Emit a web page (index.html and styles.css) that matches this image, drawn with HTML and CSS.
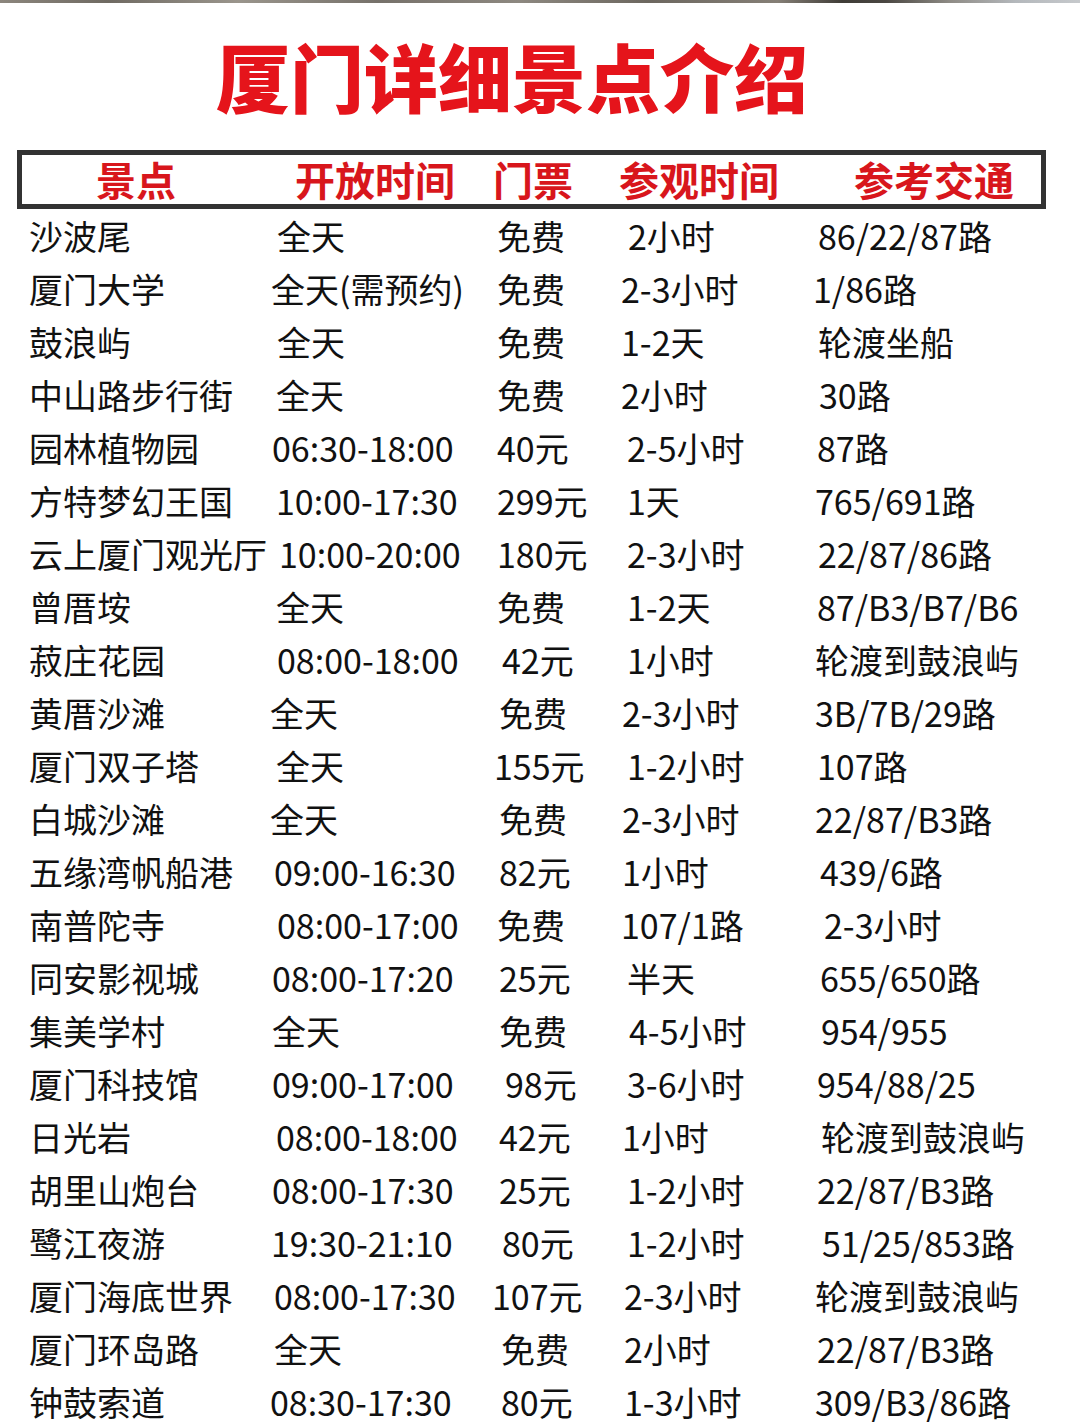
FILE: index.html
```html
<!DOCTYPE html>
<html lang="zh-CN">
<head>
<meta charset="utf-8">
<title>厦门详细景点介绍</title>
<link rel="stylesheet" href="styles.css">
</head>
<body>
<div class="page">
  <div class="strip"></div>
  <h1 class="title">厦门详细景点介绍</h1>
  <div class="head">
    <span class="h">景点</span>
    <span class="h">开放时间</span>
    <span class="h">门票</span>
    <span class="h">参观时间</span>
    <span class="h">参考交通</span>
  </div>
  <div class="table">
    <div class="row"><span>沙波尾</span><span class="s7">全天</span><span class="s5">免费</span><span class="s8">2小时</span><span class="s5">86/22/87路</span></div>
    <div class="row"><span>厦门大学</span><span class="s1">全天(需预约)</span><span class="s5">免费</span><span class="s1">2-3小时</span><span class="s0">1/86路</span></div>
    <div class="row"><span>鼓浪屿</span><span class="s7">全天</span><span class="s5">免费</span><span class="s1">1-2天</span><span class="s5">轮渡坐船</span></div>
    <div class="row"><span>中山路步行街</span><span class="s6">全天</span><span class="s5">免费</span><span class="s1">2小时</span><span class="s6">30路</span></div>
    <div class="row"><span>园林植物园</span><span class="s2">06:30-18:00</span><span class="s5">40元</span><span class="s7">2-5小时</span><span class="s4">87路</span></div>
    <div class="row"><span>方特梦幻王国</span><span class="s6">10:00-17:30</span><span class="s5">299元</span><span class="s7">1天</span><span class="s2">765/691路</span></div>
    <div class="row"><span>云上厦门观光厅</span><span class="s9">10:00-20:00</span><span class="s5">180元</span><span class="s7">2-3小时</span><span class="s5">22/87/86路</span></div>
    <div class="row"><span>曾厝垵</span><span class="s6">全天</span><span class="s5">免费</span><span class="s7">1-2天</span><span class="s4">87/B3/B7/B6</span></div>
    <div class="row"><span>菽庄花园</span><span class="s7">08:00-18:00</span><span class="s10">42元</span><span class="s7">1小时</span><span class="s2">轮渡到鼓浪屿</span></div>
    <div class="row"><span>黄厝沙滩</span><span class="s0">全天</span><span class="s7">免费</span><span class="s2">2-3小时</span><span class="s2">3B/7B/29路</span></div>
    <div class="row"><span>厦门双子塔</span><span class="s6">全天</span><span class="s2">155元</span><span class="s7">1-2小时</span><span class="s4">107路</span></div>
    <div class="row"><span>白城沙滩</span><span class="s0">全天</span><span class="s7">免费</span><span class="s2">2-3小时</span><span class="s2">22/87/B3路</span></div>
    <div class="row"><span>五缘湾帆船港</span><span class="s4">09:00-16:30</span><span class="s7">82元</span><span class="s2">1小时</span><span class="s7">439/6路</span></div>
    <div class="row"><span>南普陀寺</span><span class="s7">08:00-17:00</span><span class="s5">免费</span><span class="s1">107/1路</span><span class="s11">2-3小时</span></div>
    <div class="row"><span>同安影视城</span><span class="s2">08:00-17:20</span><span class="s7">25元</span><span class="s7">半天</span><span class="s7">655/650路</span></div>
    <div class="row"><span>集美学村</span><span class="s2">全天</span><span class="s7">免费</span><span class="s9">4-5小时</span><span class="s8">954/955</span></div>
    <div class="row"><span>厦门科技馆</span><span class="s2">09:00-17:00</span><span class="s13">98元</span><span class="s7">3-6小时</span><span class="s4">954/88/25</span></div>
    <div class="row"><span>日光岩</span><span class="s6">08:00-18:00</span><span class="s7">42元</span><span class="s2">1小时</span><span class="s8">轮渡到鼓浪屿</span></div>
    <div class="row"><span>胡里山炮台</span><span class="s2">08:00-17:30</span><span class="s7">25元</span><span class="s7">1-2小时</span><span class="s4">22/87/B3路</span></div>
    <div class="row"><span>鹭江夜游</span><span class="s1">19:30-21:10</span><span class="s10">80元</span><span class="s7">1-2小时</span><span class="s9">51/25/853路</span></div>
    <div class="row"><span>厦门海底世界</span><span class="s4">08:00-17:30</span><span class="s0">107元</span><span class="s4">2-3小时</span><span class="s2">轮渡到鼓浪屿</span></div>
    <div class="row"><span>厦门环岛路</span><span class="s4">全天</span><span class="s9">免费</span><span class="s4">2小时</span><span class="s4">22/87/B3路</span></div>
    <div class="row"><span>钟鼓索道</span><span class="s0">08:30-17:30</span><span class="s9">80元</span><span class="s4">1-3小时</span><span class="s2">309/B3/86路</span></div>
  </div>
</div>
</body>
</html>
```

FILE: styles.css
```css
* { box-sizing: border-box; margin: 0; padding: 0; }
html, body { background: #fff; }
body {
  width: 1080px;
  height: 1422px;
  overflow: hidden;
  font-family: "Noto Sans CJK SC", "Noto Sans", sans-serif;
  color: #111;
}
.page { width: 1080px; }
.strip {
  height: 3px;
  margin-bottom: 2px;
  background: linear-gradient(90deg, #8c867d 0%, #6f6a62 10%, #9a958c 22%, #76716a 35%, #8d8880 48%, #6c675f 60%, #857f76 72%, #3f3c37 78%, #4a4742 82%, #8f8c86 88%, #b4b8bc 94%, #c6c9cc 100%);
}
.title {
  text-align: center;
  font-size: 74px;
  font-weight: 900;
  color: #e5141b;
  line-height: 1;
  padding: 33px 56px 0 0;
  height: 145px;
}
.head {
  margin-left: 17px;
  width: 1029px;
  height: 59px;
  border: 5px solid #323232;
  display: grid;
  grid-template-columns: 199px 198px 126px 235px 1fr;
  align-items: center;
  padding-left: 74px;
}
.h {
  font-size: 40px;
  font-weight: 700;
  color: #d8161c;
  line-height: 49px;
  white-space: nowrap;
}

.table {
  padding-left: 29px;
  padding-top: 0;
}
.row {
  display: grid;
  grid-template-columns: 241px 222px 128px 193px 1fr;
  height: 53px;
  line-height: 53px;
  font-size: 34px;
  white-space: nowrap;
}
.s0 { padding-left: 0; }
.s1 { padding-left: 1px; }
.s2 { padding-left: 2px; }
.s4 { padding-left: 4px; }
.s5 { padding-left: 5px; }
.s6 { padding-left: 6px; }
.s7 { padding-left: 7px; }
.s8 { padding-left: 8px; }
.s9 { padding-left: 9px; }
.s10 { padding-left: 10px; }
.s11 { padding-left: 11px; }
.s13 { padding-left: 13px; }
```
